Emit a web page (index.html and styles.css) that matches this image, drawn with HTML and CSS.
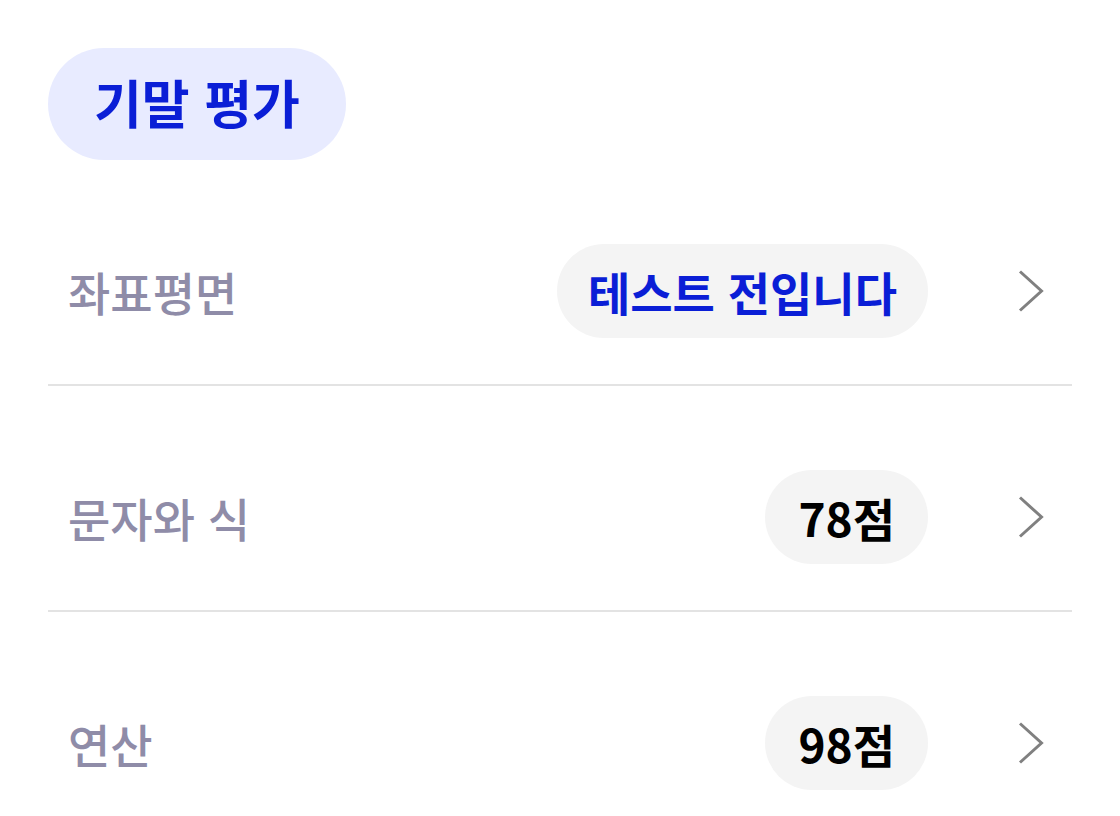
FILE: index.html
```html
<!DOCTYPE html>
<html lang="ko">
<head>
<meta charset="utf-8">
<link rel="stylesheet" href="styles.css">
</head>
<body>
<div class="page">
  <div class="title-pill">기말 평가</div>
  <ul class="list">
    <li class="row">
      <span class="label">좌표평면</span>
      <span class="pill pill-blue">테스트 전입니다</span>
      <svg class="chev" viewBox="0 0 48 48" width="48" height="48"><path d="M18 4.5 L39.5 24 L18 43.5" fill="none" stroke="#808080" stroke-width="3"/></svg>
    </li>
    <li class="row">
      <span class="label">문자와 식</span>
      <span class="pill">78점</span>
      <svg class="chev" viewBox="0 0 48 48" width="48" height="48"><path d="M18 4.5 L39.5 24 L18 43.5" fill="none" stroke="#808080" stroke-width="3"/></svg>
    </li>
    <li class="row">
      <span class="label">연산</span>
      <span class="pill">98점</span>
      <svg class="chev" viewBox="0 0 48 48" width="48" height="48"><path d="M18 4.5 L39.5 24 L18 43.5" fill="none" stroke="#808080" stroke-width="3"/></svg>
    </li>
  </ul>
</div>
</body>
</html>
```

FILE: styles.css
```css
html, body {
  margin: 0;
  padding: 0;
  background: #ffffff;
}
body {
  font-family: "Noto Sans CJK KR", "Noto Sans", sans-serif;
}
.page {
  padding: 48px 48px 0;
}
.title-pill {
  display: inline-flex;
  align-items: center;
  height: 112px;
  padding: 0 46px 4px;
  box-sizing: border-box;
  border-radius: 56px;
  background: #e8ebff;
  color: #0a1ed6;
  font-size: 52px;
  font-weight: 700;
  line-height: 1;
}
.list {
  list-style: none;
  margin: 0;
  padding: 0;
}
.row {
  display: flex;
  align-items: center;
  padding: 84px 0 46px 20px;
  border-bottom: 2px solid #e3e3e3;
}
.label {
  flex: 1;
  font-size: 46px;
  font-weight: 500;
  color: #8f8ca8;
  line-height: 1;
}
.pill {
  display: inline-flex;
  align-items: center;
  height: 94px;
  padding: 0 33px;
  box-sizing: border-box;
  border-radius: 47px;
  background: #f4f4f4;
  color: #000000;
  font-size: 46px;
  font-weight: 700;
  line-height: 1;
}
.pill-blue {
  color: #0a1ed6;
  padding: 0 31px;
}
.chev {
  margin-left: 74px;
  margin-right: 22px;
  flex: none;
}
```
